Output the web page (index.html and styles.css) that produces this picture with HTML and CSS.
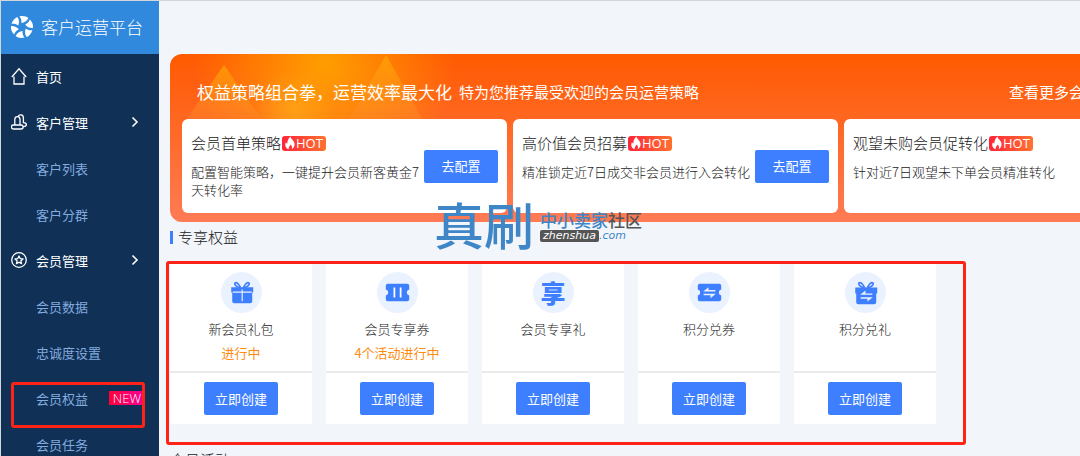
FILE: index.html
```html
<!DOCTYPE html>
<html lang="zh-CN">
<head>
    <meta charset="UTF-8">
    <meta name="viewport" content="width=device-width, initial-scale=1.0">
    <title>客户运营平台</title>
    <link rel="stylesheet" href="styles.css">
</head>
<body>

    <!-- Shared icon shapes -->
    <svg class="sprite" aria-hidden="true">
        <symbol id="flame" viewBox="0 0 12 14">
            <path fill="#fff" d="M6.4 0.6C6.8 3 9 4 10 6C11.4 9 10 12 7.6 13.2C8.6 11.4 8 9.8 6.4 8.4C6.2 9.8 4.6 10.4 4.6 13.2C1.4 12 0.4 8.8 2 6.2C2.4 7 2.8 7.4 3.4 7.6C3.2 5 4.4 2.4 6.4 0.6Z"/>
        </symbol>
        <symbol id="chevron" viewBox="0 0 8 12">
            <path fill="none" stroke="#fff" stroke-width="1.6" d="M1.5 1.5L6 6L1.5 10.5"/>
        </symbol>
    </svg>

    <aside class="sidebar">
        <div class="brand">
            <svg class="brand-logo" viewBox="0 0 24 24" aria-hidden="true">
                <g fill="#fff">
                    <path id="blade" d="M9.4 1.5C13 0.4 16.6 1.4 18.4 3C17 6 14.4 7.6 11.4 8C11.8 5.4 11 3.200 9.400 1.500Z"/>
                    <use href="#blade" transform="rotate(60 12 12)"/>
                    <use href="#blade" transform="rotate(120 12 12)"/>
                    <use href="#blade" transform="rotate(180 12 12)"/>
                    <use href="#blade" transform="rotate(240 12 12)"/>
                    <use href="#blade" transform="rotate(300 12 12)"/>
                </g>
            </svg>
            <span>客户运营平台</span>
        </div>
        <nav class="menu">
            <a class="menu-item" href="#">
                <svg class="menu-icon" viewBox="0 0 16 18" aria-hidden="true"><path fill="none" stroke="#fff" stroke-width="1.3" d="M0.8 10L8 1.8L15.2 10M3 9.400V17H13V9.400"/></svg>
                <span>首页</span>
            </a>
            <a class="menu-item" href="#">
                <svg class="menu-icon" viewBox="0 0 16 18" aria-hidden="true"><path fill="none" stroke="#fff" stroke-width="1.3" d="M3.8 11.6V6.4C3.8 2.800 9 2.800 9 6.400V11.600M7.200 3.600C7.800 1.200 12.400 1 12.400 5V9.600C14.400 9.600 15.400 10.400 15.400 11.800C15.400 13.200 14.400 13.600 12.600 13.600M2.400 12H10C12.800 12 12.800 16 10 16H2.400C-0.200 16 -0.200 12 2.400 12Z"/></svg>
                <span>客户管理</span>
                <svg class="arrow" aria-hidden="true"><use href="#chevron"/></svg>
            </a>
            <a class="menu-item sub" href="#">客户列表</a>
            <a class="menu-item sub" href="#">客户分群</a>
            <a class="menu-item" href="#">
                <svg class="menu-icon" viewBox="0 0 16 18" aria-hidden="true"><g fill="none" stroke="#fff" stroke-width="1.3"><circle cx="8" cy="9" r="7.3"/><path stroke-linejoin="round" d="M8 5L9.2 7.6L12 7.9L9.9 9.8L10.5 12.6L8 11.2L5.5 12.6L6.1 9.8L4 7.9L6.8 7.6Z"/></g></svg>
                <span>会员管理</span>
                <svg class="arrow" aria-hidden="true"><use href="#chevron"/></svg>
            </a>
            <a class="menu-item sub" href="#">会员数据</a>
            <a class="menu-item sub" href="#">忠诚度设置</a>
            <a class="menu-item sub marked" href="#">会员权益<span class="new-tag">NEW</span></a>
            <a class="menu-item sub" href="#">会员任务</a>
        </nav>
    </aside>

    <main class="content">
        <section class="banner">
            <svg class="banner-art" viewBox="0 0 300 66" aria-hidden="true">
                <defs>
                    <linearGradient id="peak" x1="0" y1="0" x2="0" y2="1">
                        <stop offset="0" stop-color="#ffa800" stop-opacity="0.7"/>
                        <stop offset="1" stop-color="#ff9030" stop-opacity="0.3"/>
                    </linearGradient>
                </defs>
                <path fill="url(#peak)" d="M54 11L92 66H16Z"/>
                <path fill="url(#peak)" d="M216 1L253 66H179Z"/>
            </svg>
            <div class="banner-head">
                <h1>权益策略组合拳，运营效率最大化</h1>
                <p>特为您推荐最受欢迎的会员运营策略</p>
                <a href="#">查看更多会员运营策略</a>
            </div>
            <div class="strategies">
                <article class="strategy">
                    <div class="strategy-text">
                        <h2>会员首单策略<span class="hot"><svg aria-hidden="true"><use href="#flame"/></svg>HOT</span></h2>
                        <p>配置智能策略，一键提升会员新客黄金7天转化率</p>
                    </div>
                    <button class="btn">去配置</button>
                </article>
                <article class="strategy">
                    <div class="strategy-text">
                        <h2>高价值会员招募<span class="hot"><svg aria-hidden="true"><use href="#flame"/></svg>HOT</span></h2>
                        <p>精准锁定近7日成交非会员进行入会转化</p>
                    </div>
                    <button class="btn">去配置</button>
                </article>
                <article class="strategy">
                    <div class="strategy-text">
                        <h2>观望未购会员促转化<span class="hot"><svg aria-hidden="true"><use href="#flame"/></svg>HOT</span></h2>
                        <p>针对近7日观望未下单会员精准转化</p>
                    </div>
                    <button class="btn">去配置</button>
                </article>
            </div>
            <div class="watermark">
                <span class="wm-name">真刷</span>
                <span class="wm-side">
                    <span class="wm-top">中小卖家<b>社区</b></span>
                    <span class="wm-url"><b>zhenshua</b>.com</span>
                </span>
            </div>
        </section>

        <h2 class="section-title barred">专享权益</h2>
        <section class="benefits">
            <article class="benefit">
                <div class="benefit-info">
                    <svg class="benefit-icon" viewBox="0 0 42 42" aria-hidden="true">
                        <circle cx="21" cy="21" r="21" fill="#eaf2ff"/>
                        <path fill="none" stroke="#3e7fff" stroke-width="1.7" d="M20 16C16.5 16 13 12.6 14.4 11.2C16 9.8 18.6 12.6 20 16ZM23 16C26.5 16 30 12.6 28.6 11.2C27 9.8 24.4 12.6 23 16Z"/>
                        <path fill="#3e7fff" d="M10.500 15.500H33V21H32V30Q32 32 30 32H13.500Q11.500 32 11.500 30V21H10.500Z"/>
                        <path stroke="#eaf2ff" stroke-width="1.2" d="M12 20.6H31.500M21.7 18V30"/>
                    </svg>
                    <h3>新会员礼包</h3>
                    <p>进行中</p>
                </div>
                <button class="btn">立即创建</button>
            </article>
            <article class="benefit">
                <div class="benefit-info">
                    <svg class="benefit-icon" viewBox="0 0 42 42" aria-hidden="true">
                        <circle cx="21" cy="21" r="21" fill="#eaf2ff"/>
                        <path fill="#3e7fff" d="M11 12H31Q33 12 33 14V18Q30.500 18.500 30.500 21T33 24V28Q33 30 31 30H11Q9 30 9 28V24Q11.500 23.500 11.500 21T9 18V14Q9 12 11 12Z"/>
                        <path stroke="#fff" stroke-width="1.8" d="M17.800 16V26M24.200 16V26"/>
                    </svg>
                    <h3>会员专享券</h3>
                    <p>4个活动进行中</p>
                </div>
                <button class="btn">立即创建</button>
            </article>
            <article class="benefit">
                <div class="benefit-info">
                    <span class="benefit-icon char-icon">享</span>
                    <h3>会员专享礼</h3>
                </div>
                <button class="btn">立即创建</button>
            </article>
            <article class="benefit">
                <div class="benefit-info">
                    <svg class="benefit-icon" viewBox="0 0 42 42" aria-hidden="true">
                        <circle cx="21" cy="21" r="21" fill="#eaf2ff"/>
                        <path fill="#3e7fff" d="M11 12H31Q33 12 33 14V18Q30.500 18.500 30.500 21T33 24V28Q33 30 31 30H11Q9 30 9 28V24Q11.500 23.500 11.500 21T9 18V14Q9 12 11 12Z"/>
                        <path fill="#eaf2ff" d="M14.500 20L20 15.600V18.500H27V20ZM27.500 22.400L22 26.800V23.900H15V22.400Z"/>
                    </svg>
                    <h3>积分兑券</h3>
                </div>
                <button class="btn">立即创建</button>
            </article>
            <article class="benefit">
                <div class="benefit-info">
                    <svg class="benefit-icon" viewBox="0 0 42 42" aria-hidden="true">
                        <circle cx="21" cy="21" r="21" fill="#eaf2ff"/>
                        <path fill="none" stroke="#3e7fff" stroke-width="1.7" d="M20 16C16.5 16 13 12.6 14.4 11.2C16 9.8 18.6 12.6 20 16ZM23 16C26.5 16 30 12.6 28.6 11.2C27 9.8 24.4 12.6 23 16Z"/>
                        <path fill="#3e7fff" d="M10.500 16H33V22H32V31Q32 33 30 33H13.500Q11.500 33 11.500 31V22H10.500Z"/>
                        <path fill="#eaf2ff" d="M15.500 23.400L21 19V21.900H28V23.400ZM28.500 25.800L23 30.200V27.300H16V25.800Z"/>
                    </svg>
                    <h3>积分兑礼</h3>
                </div>
                <button class="btn">立即创建</button>
            </article>
        </section>

        <h2 class="section-title">会员活动</h2>
    </main>

</body>
</html>
```

FILE: styles.css
```css
* {
    box-sizing: border-box;
}

body {
    margin: 0;
    display: flex;
    height: 100vh;
    overflow: hidden;
    border-top: 1px solid #d3d6da;
    border-left: 1px solid #d3d6da;
    background-color: #f2f5fa;
    color: #222;
    font-family: "Noto Sans CJK SC", sans-serif;
    font-size: 13px;
    font-weight: 300;
}

h1, h2, h3, p {
    margin: 0;
    font-weight: inherit;
}

a {
    color: inherit;
    text-decoration: none;
}

.sprite {
    position: absolute;
    width: 0;
    height: 0;
}

/* Sidebar */
.sidebar {
    flex: 0 0 158px;
    background-color: #103056;
    color: #fff;
}

.brand {
    display: flex;
    align-items: center;
    gap: 7px;
    height: 53px;
    padding: 0 0 2px 9px;
    background-color: #3089dc;
    font-size: 17px;
}

.brand-logo {
    width: 24px;
    height: 24px;
}

.menu-item {
    display: flex;
    align-items: center;
    height: 46px;
    padding: 0 20px 2px 10px;
    font-weight: 400;
}

.menu-icon {
    width: 16px;
    height: 18px;
    margin-right: 9px;
}

.arrow {
    width: 8px;
    height: 12px;
    margin-left: auto;
}

.sub {
    position: relative;
    padding: 0 14px 2px 35px;
    color: #82abdf;
}

.new-tag {
    margin-left: auto;
    padding: 0 4px;
    background: linear-gradient(90deg, #ff0038, #f5009a);
    color: #fff;
    font-family: "Open Sans", sans-serif;
    font-size: 13px;
    font-weight: 300;
    line-height: 14px;
}

/* Red frames around the highlighted parts */
.marked::after,
.benefits::after {
    content: "";
    position: absolute;
    border: 3px solid #ff2317;
    border-radius: 3px;
}

.marked::after {
    inset: 6px 14px -6px 10px;
}

/* Main column */
.content {
    flex: 1 1 0;
    min-width: 1033px;
    padding: 53px 11px 0;
}

/* Banner */
.banner {
    position: relative;
    padding: 0 12px 9px;
    border-radius: 12px;
    background:
        radial-gradient(circle at 155px 10px, rgba(255, 165, 0, 0.9), rgba(255, 150, 0, 0) 130px),
        radial-gradient(circle at 125px 55px, rgba(255, 175, 50, 0.7), rgba(255, 150, 0, 0) 40px),
        linear-gradient(#ff5a00, #ff7b55);
}

.banner-art {
    position: absolute;
    top: 0;
    left: 0;
    width: 300px;
    height: 66px;
}

.banner-head {
    position: relative;
    display: flex;
    align-items: center;
    height: 65px;
    padding: 9px 10px 0 15px;
    color: #fff;
    font-size: 15px;
    font-weight: 400;
}

.banner-head h1 {
    margin-right: 7px;
    font-size: 17px;
}

.banner-head a {
    margin-left: auto;
}

.strategies {
    position: relative;
    display: grid;
    grid-template-columns: repeat(3, 1fr);
    gap: 6px;
}

.strategy {
    display: flex;
    align-items: center;
    height: 94px;
    padding: 0 9px;
    border-radius: 6px;
    background-color: #fff;
}

.strategy-text {
    flex: 1;
    align-self: flex-start;
    padding-top: 13px;
}

.strategy h2 {
    display: flex;
    align-items: center;
    gap: 1px;
    font-size: 15px;
    line-height: 22px;
}

.strategy p {
    margin-top: 9px;
    line-height: 18px;
}

.hot {
    display: flex;
    align-items: center;
    height: 15px;
    padding: 0 3px 0 2px;
    border-radius: 3px;
    background: linear-gradient(90deg, #ff2438, #ff7230);
    color: #fff;
    font-family: "Open Sans", sans-serif;
    font-size: 13px;
    font-weight: 500;
}

.hot svg {
    width: 12px;
    height: 14px;
}

.btn {
    width: 74px;
    height: 33px;
    padding: 0 0 1px;
    border: none;
    border-radius: 2px;
    background-color: #3e7fff;
    color: #fff;
    font-family: inherit;
    font-size: 13px;
    cursor: pointer;
}

/* Site watermark, lies across the banner edge */
.watermark {
    position: absolute;
    top: 144px;
    left: 264px;
    display: flex;
    align-items: center;
    gap: 6px;
    color: #3f86c6;
}

.wm-name {
    font-size: 50px;
    font-weight: 500;
    line-height: 50px;
}

.wm-side {
    display: flex;
    flex-direction: column;
    gap: 2px;
    padding-top: 6px;
}

.wm-top {
    font-size: 17px;
    font-weight: 500;
    line-height: 17px;
}

.wm-top b {
    color: #555;
    font-weight: 500;
}

.wm-url {
    font-family: "DejaVu Sans", sans-serif;
    font-size: 11px;
    font-style: italic;
    line-height: 12px;
}

.wm-url b {
    display: inline-block;
    padding: 0 3px;
    border-radius: 2px;
    background-color: #555;
    color: #fff;
    font-weight: 400;
}

/* Benefit cards */
.section-title {
    margin-top: 3px;
    font-size: 15px;
    line-height: 24px;
}

.barred {
    display: flex;
    align-items: center;
    gap: 5px;
}

.barred::before {
    content: "";
    width: 3px;
    height: 13px;
    background-color: #3e7fff;
}

.benefits {
    position: relative;
    display: flex;
    gap: 14px;
    width: max-content;
    margin: 14px 0 24px;
}

.benefits::after {
    inset: -2px -30px -21px -4px;
    pointer-events: none;
}

.benefit {
    width: 142px;
    padding-bottom: 9px;
    background-color: #fff;
    text-align: center;
}

.benefit-info {
    height: 110px;
    margin-bottom: 9px;
    padding-top: 9px;
    border-bottom: 2px solid #ebebeb;
}

.benefit-icon {
    display: block;
    width: 41px;
    height: 41px;
    margin: 0 auto 4px;
}

.char-icon {
    border-radius: 50%;
    background-color: #eaf2ff;
    color: #3e7fff;
    font-size: 25px;
    font-weight: 900;
    line-height: 41px;
}

.benefit h3,
.benefit p {
    font-size: 13px;
    line-height: 24px;
}

.benefit p {
    color: #ff8c10;
    font-weight: 400;
}
```
